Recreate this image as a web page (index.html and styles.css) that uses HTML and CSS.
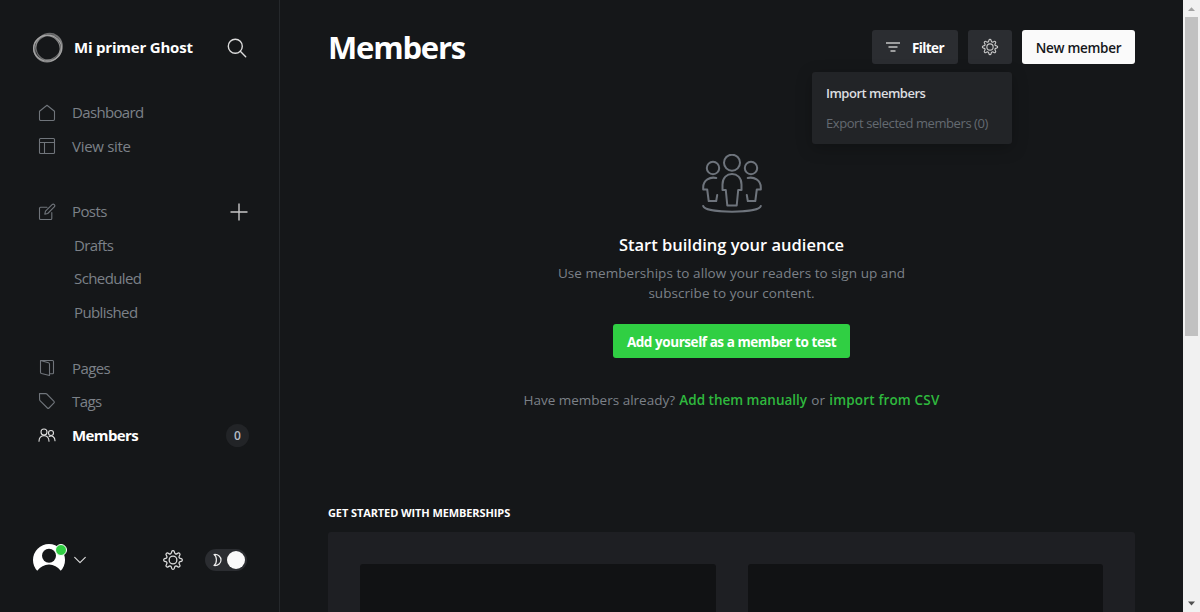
FILE: index.html
```html
<!DOCTYPE html>
<html lang="en">
<head>
<meta charset="utf-8">
<title>Members</title>
<link rel="stylesheet" href="styles.css">
</head>
<body>
<svg class="sprite" width="0" height="0">
  <symbol id="gear" viewBox="0 0 24 24">
    <path d="M10.6 2.9a1.45 1.45 0 0 1 2.8 0l.4 1.4a1.6 1.6 0 0 0 2.3.95l1.3-.7a1.5 1.5 0 0 1 2.05 2.05l-.7 1.3a1.6 1.6 0 0 0 .95 2.3l1.4.4a1.45 1.45 0 0 1 0 2.8l-1.4.4a1.6 1.6 0 0 0-.95 2.3l.7 1.3a1.5 1.5 0 0 1-2.05 2.05l-1.3-.7a1.6 1.6 0 0 0-2.3.95l-.4 1.4a1.45 1.45 0 0 1-2.8 0l-.4-1.4a1.6 1.6 0 0 0-2.3-.95l-1.3.7a1.5 1.5 0 0 1-2.05-2.05l.7-1.3a1.6 1.6 0 0 0-.95-2.3l-1.4-.4a1.45 1.45 0 0 1 0-2.8l1.4-.4a1.6 1.6 0 0 0 .95-2.3l-.7-1.3A1.5 1.5 0 0 1 6.6 4.55l1.3.7a1.6 1.6 0 0 0 2.3-.95z"/>
    <circle cx="12" cy="12" r="4.2"/>
  </symbol>
</svg>
<div class="app">
  <aside class="sidebar">
    <header class="brand">
      <svg class="logo" viewBox="0 0 32 32"><ellipse cx="15.6" cy="16.200" rx="14" ry="13"/><ellipse cx="15" cy="16.800" rx="13.200" ry="13.200" opacity=".8"/><ellipse cx="16.800" cy="14.800" rx="13" ry="13.600" transform="rotate(35 17 15.400)" opacity=".6"/><ellipse cx="16.400" cy="15.800" rx="14" ry="11.800" transform="rotate(-38 16 16)" opacity=".6"/></svg>
      <span class="site-name">Mi primer Ghost</span>
      <svg class="search" viewBox="0 0 20 20"><circle cx="8.3" cy="8.3" r="7"/><path d="M13.3 13.3l5.4 5.4"/></svg>
    </header>
    <nav class="nav">
      <div class="group">
        <a class="item"><svg class="icon" viewBox="0 0 18 18"><path d="M1.5 7.2 9 1.2l7.500 6v8.100a1.200 1.200 0 0 1-1.200 1.200H2.700a1.200 1.200 0 0 1-1.200-1.200z"/></svg><span class="raised tight">Dashboard</span></a>
        <a class="item"><svg class="icon" viewBox="0 0 18 18"><rect x="1.500" y="1.500" width="15" height="15" rx="1"/><path d="M1.500 5.500h15M6.500 5.500v11"/></svg><span class="loose">View site</span></a>
      </div>
      <div class="group posts">
        <a class="item"><svg class="icon" viewBox="0 0 18 18"><path d="M9 4.200H2.500a1 1 0 0 0-1 1v10.300a1 1 0 0 0 1 1h10.300a1 1 0 0 0 1-1V9.500"/><path d="M6.800 11.200l.7-3 6.600-6.600a1.500 1.500 0 0 1 2.200 2.200L9.700 10.500z"/></svg><span class="raised">Posts</span><svg class="plus" viewBox="0 0 18 18"><path d="M9 .5v17M.5 9h17"/></svg></a>
        <a class="item sub"><span>Drafts</span></a>
        <a class="item sub"><span class="raised">Scheduled</span></a>
        <a class="item sub"><span>Published</span></a>
      </div>
      <div class="group pages">
        <a class="item"><svg class="icon" viewBox="0 0 18 18"><path d="M2.500 1.500l8 2.200q1 .3 1 1.300v11.500l-8-2q-1-.3-1-1.300zM2.500 1.500h12a1 1 0 0 1 1 1v11.300a1 1 0 0 1-1 1h-3"/></svg><span>Pages</span></a>
        <a class="item"><svg class="icon" viewBox="0 0 18 18"><path d="M1.500 1.500l6.300.1q.6 0 1 .4l7.200 7.300q.8.800 0 1.600l-5 5.100q-.8.800-1.600 0L2 8.600q-.4-.4-.4-1z"/></svg><span>Tags</span></a>
        <a class="item active"><svg class="icon" viewBox="0 0 18 18"><circle cx="6" cy="6" r="3"/><path d="M1 15.200c0-3.500 2-5.600 5-5.600s5 2.100 5 5.600"/><circle cx="13" cy="7" r="2.500"/><path d="M11.200 10.500c3-1.300 5.800.5 5.800 4.200"/></svg><span>Members</span><b class="count">0</b></a>
      </div>
    </nav>
    <footer class="user">
      <div class="avatar"><svg viewBox="0 0 32 32"><circle class="face-bg" cx="16" cy="16" r="16"/><circle class="face" cx="16" cy="11.800" r="7"/><path class="face" d="M-1 27h5q5-6.500 12-6.500T28 27h5v6H-1z"/></svg><i class="online"></i></div>
      <svg class="chevron" viewBox="0 0 12 8"><path d="M.7 1.300 6 6.700l5.300-5.400"/></svg>
      <svg class="settings"><use href="#gear"/></svg>
      <div class="toggle"><svg viewBox="0 0 12 14"><path d="M2 1.500c3 1.800 3.400 8.500 0 11 4.500.5 7-2.500 7-5.500S6.500 1 2 1.500z"/></svg><i class="knob"></i></div>
    </footer>
  </aside>
  <main class="main">
    <header class="top">
      <h1 class="title"><span>Members</span></h1>
      <div class="actions">
        <button class="btn filter"><svg viewBox="0 0 14 10"><path d="M0 1h14M2.500 5h9M4.500 9h5"/></svg><span>Filter</span></button>
        <div class="menu-anchor">
          <button class="btn cog"><svg><use href="#gear"/></svg></button>
          <div class="menu"><span class="import">Import members</span><span class="export">Export selected members (0)</span></div>
        </div>
        <button class="btn primary"><span>New member</span></button>
      </div>
    </header>
    <section class="empty">
      <svg class="people" viewBox="0 0 60 60"><circle cx="30" cy="8.700" r="8"/><circle cx="11" cy="14" r="6.200"/><circle cx="49" cy="14" r="6.200"/><path d="M25.300 51.500 23.800 36h-3.300v-5.500C20.500 23.500 25 20 30 20s9.500 3.500 9.500 10.500V36h-3.300l-1.500 15.500z"/><path d="M14.300 24C8 22.500 1.200 26 1.200 33.500V35.500h4l1.500 11.500h7.500l1-6"/><path d="M45.700 24C52 22.500 58.800 26 58.800 33.500V35.500h-4l-1.500 11.500h-7.500l-1-6"/><path d="M1.200 52c2 7.500 55.600 7.500 57.600 0"/></svg>
      <h2 class="headline"><span>Start building your audience</span></h2>
      <p class="copy"><span>Use memberships to allow your readers to sign up and</span><span>subscribe to your content.</span></p>
      <button class="btn green"><span>Add yourself as a member to test</span></button>
      <p class="already"><span>Have members already?</span><a class="manual">Add them manually</a><span>or</span><a class="csv">import from CSV</a></p>
    </section>
    <section class="start">
      <h4 class="start-title"><span>GET STARTED WITH MEMBERSHIPS</span></h4>
      <div class="panel"><div class="card"></div><div class="card"></div></div>
    </section>
  </main>
  <div class="scrollbar"><svg class="arrow up" viewBox="0 0 17 17"><path d="M5 11h7L8.500 7.300z"/></svg><div class="thumb"></div><svg class="arrow down" viewBox="0 0 17 17"><path d="M5 6.500h7l-3.500 4z"/></svg></div>
</div>
</body>
</html>
```
FILE: styles.css
```css
* { box-sizing: border-box; }
body { margin: 0; background: #151719; font-family: "Open Sans", "Noto Sans", sans-serif; color: #fff; overflow: hidden; }
svg { fill: none; stroke: currentColor; stroke-linecap: round; stroke-linejoin: round; display: block; flex: none; }
span, a { white-space: nowrap; }
h1, h2, h4, p { margin: 0; }
.sprite { position: absolute; }
.app { display: flex; width: 1200px; height: 612px; overflow: hidden; }

.sidebar { width: 280px; flex: none; border-right: 1px solid #25282b; display: flex; flex-direction: column; }
.brand { height: 96px; padding-left: 32px; display: flex; align-items: center; }
.logo { width: 32px; height: 32px; color: #a5a5a5; stroke-width: 1.2; }
.site-name { margin-left: 10px; width: 143px; font-size: 15px; font-weight: 700; letter-spacing: -.2px; padding-bottom: 2px; }
.search { width: 20px; height: 20px; margin-left: 10px; color: #dcdcdc; stroke-width: 1.4; }
.group { margin-bottom: 32px; }
.posts { margin-bottom: 22px; }
.item { height: 33.5px; padding-left: 38px; display: flex; align-items: center; font-size: 15px; color: #7c8188; letter-spacing: -.6px; }
.item .raised { padding-bottom: 2px; }
.item .tight { letter-spacing: -.65px; }
.item .loose { letter-spacing: -.3px; }
.item.sub { padding-left: 74px; }
.icon { width: 18px; height: 18px; margin-right: 16px; stroke-width: 1.1; color: #70757b; }
.plus { width: 18px; height: 18px; margin-left: auto; margin-right: 31px; color: #c8c8c8; stroke-width: 1.4; stroke-linecap: butt; }
.active { color: #fff; font-weight: 700; }
.active .icon { color: #e0e0e0; }
.count { width: 23px; height: 23px; border-radius: 50%; background: #222427; color: #b6bcc4; font-size: 12px; font-weight: 600; line-height: 24px; text-align: center; margin-top: 1px; margin-left: auto; margin-right: 30px; letter-spacing: 0; }
.user { margin-top: auto; height: 104px; padding-left: 33px; display: flex; align-items: center; }
.avatar { position: relative; width: 32px; height: 32px; }
.avatar svg { width: 32px; height: 32px; stroke: none; overflow: visible; }
.face-bg { fill: #fff; }
.face { fill: #151719; }
.online { position: absolute; right: -2px; top: 0; width: 12px; height: 12px; border-radius: 50%; background: #30cf43; border: 1px solid #fff; }
.chevron { width: 12px; height: 8px; margin-left: 9px; color: #ddd; stroke-width: 1.1; }
.settings { width: 22px; height: 22px; margin-left: 76px; color: #ddd; stroke-width: 1.4; }
.toggle { width: 42px; height: 22px; margin-left: 21px; border-radius: 11px; background: #2b2d31; display: flex; align-items: center; justify-content: space-between; padding: 0 2px 0 7px; }
.toggle svg { width: 12px; height: 14px; stroke-width: 1.2; color: #eee; }
.knob { width: 18px; height: 18px; border-radius: 50%; background: #fafafa; }

.main { width: 903px; flex: none; padding: 0 48px; }
.top { height: 96px; display: flex; justify-content: space-between; align-items: center; }
.title { font-size: 31px; font-weight: 700; letter-spacing: -1.2px; padding-bottom: 3px; }
.actions { display: flex; gap: 10px; margin-top: -2px; }
.btn { height: 34px; border: 0; border-radius: 3px; padding: 0; display: flex; align-items: center; justify-content: center; font: 600 13.5px "Open Sans", "Noto Sans", sans-serif; color: #fff; background: #2b2d31; }
.btn span { margin-top: 2px; }
.filter { width: 86px; gap: 12px; font-weight: 700; letter-spacing: -.6px; }
.filter svg { width: 14px; height: 10px; stroke-width: 1.6; stroke-linecap: butt; color: #c4c4c4; }
.menu-anchor { position: relative; }
.cog { width: 44px; }
.cog svg { width: 18px; height: 18px; stroke-width: 1.5; color: #c8c8c8; }
.primary { width: 113px; background: #fafafa; color: #15171a; letter-spacing: -.3px; }
.menu { position: absolute; right: 0; top: 42px; width: 200px; height: 72px; padding: 6px 14px; background: #222427; border-radius: 3px; box-shadow: 0 4px 16px rgba(0,0,0,.25); font-size: 13px; line-height: 30px; display: flex; flex-direction: column; align-items: flex-start; z-index: 2; }
.import { color: #dcdee0; font-weight: 600; letter-spacing: -.5px; }
.export { color: #646a71; letter-spacing: -.42px; }
.empty { height: 409px; padding-top: 58px; display: flex; flex-direction: column; align-items: center; }
.people { width: 60px; height: 60px; color: #6e747c; stroke-width: 2; }
.headline { margin-top: 19px; height: 24px; line-height: 24px; font-size: 16.5px; font-weight: 600; }
.copy { margin-top: 6px; line-height: 20px; font-size: 13.5px; letter-spacing: .06px; color: #7c8188; display: flex; flex-direction: column; align-items: center; }
.green { width: 237px; margin-top: 21px; background: #30cf43; font-weight: 700; letter-spacing: -.44px; }
.already { margin-top: 32px; width: 416px; line-height: 20px; font-size: 13.5px; color: #7c8188; display: flex; justify-content: space-between; }
.already a { color: #2fb93e; font-weight: 600; }
.already .csv { letter-spacing: .17px; }
.start-title { height: 16px; line-height: 16px; font-size: 11px; font-weight: 700; letter-spacing: -.1px; }
.panel { margin-top: 11px; height: 300px; padding: 32px; background: #1e1f23; border-radius: 3px; display: grid; grid-template-columns: 1fr 1fr; gap: 32px; }
.card { background: #111214; border-radius: 3px; }

.scrollbar { width: 17px; flex: none; background: #f1f1f1; display: flex; flex-direction: column; align-items: center; }
.arrow { width: 17px; height: 17px; stroke: none; fill: #505050; }
.up { fill: #a3a3a3; }
.down { margin-top: auto; }
.thumb { width: 13px; height: 319px; background: #c1c1c1; }
```
